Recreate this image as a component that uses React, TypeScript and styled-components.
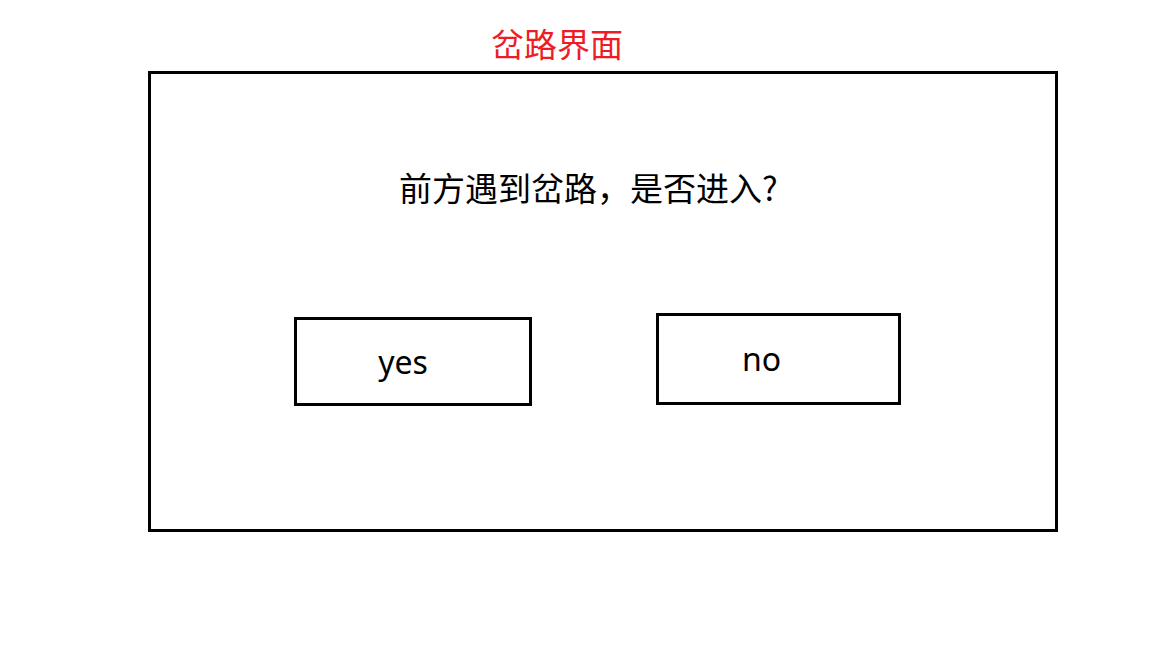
import React from "react";
import styled, { createGlobalStyle } from "styled-components";

const Global = createGlobalStyle`
  html, body { margin: 0; padding: 0; background: #ffffff; }
  body { font-family: "Noto Sans", "Noto Sans CJK SC", sans-serif; }
`;

const Page = styled.div`
  width: 1152px;
  height: 648px;
  box-sizing: border-box;
  padding: 23px 0 0 148px;
  display: flex;
  flex-direction: column;
  align-items: flex-start;
`;

const Title = styled.h1`
  margin: 0 0 0 343px;
  font-family: "Noto Sans CJK SC", sans-serif;
  font-weight: 400;
  font-size: 33px;
  line-height: 41px;
  color: #ee1c25;
`;

const Dialog = styled.section`
  margin-top: 7px;
  width: 910px;
  height: 461px;
  box-sizing: border-box;
  border: 3px solid #000;
  padding: 92px 0 0 0;
  display: flex;
  flex-direction: column;
  align-items: flex-start;
`;

const Question = styled.p`
  margin: 0 0 0 248px;
  font-family: "Noto Sans CJK SC", sans-serif;
  font-size: 33px;
  line-height: 42px;
  color: #000;
`;

const ButtonRow = styled.div`
  margin-top: 105px;
  padding-left: 143px;
  display: flex;
  align-items: flex-start;
  gap: 124px;
`;

const Choice = styled.button<{ $w: number; $h: number; $top: number; $shift: number }>`
  width: ${(p) => p.$w}px;
  height: ${(p) => p.$h}px;
  margin-top: ${(p) => p.$top}px;
  box-sizing: border-box;
  border: 3px solid #000;
  background: #fff;
  padding: 0 ${(p) => p.$shift}px 0 0;
  display: flex;
  align-items: center;
  justify-content: center;
  font-family: "Noto Sans", "Noto Sans CJK SC", sans-serif;
  font-size: 32px;
  line-height: 40px;
  color: #000;
  cursor: pointer;
`;

export default function App() {
  return (
    <>
      <Global />
      <Page>
        <Title>岔路界面</Title>
        <Dialog>
          <Question>前方遇到岔路，是否进入?</Question>
          <ButtonRow>
            <Choice $w={238} $h={89} $top={4} $shift={20}>yes</Choice>
            <Choice $w={245} $h={92} $top={0} $shift={34}>no</Choice>
          </ButtonRow>
        </Dialog>
      </Page>
    </>
  );
}
